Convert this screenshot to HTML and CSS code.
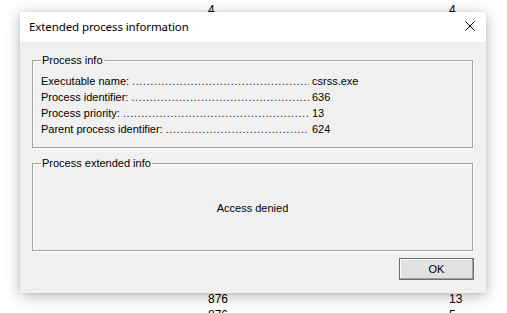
FILE: index.html
```html
<!DOCTYPE html>
<html>
<head>
<meta charset="utf-8">
<link rel="stylesheet" href="styles.css">
</head>
<body>
<div class="bg">
  <div class="bg-row top"><span class="c1">4</span><span class="c2">4</span></div>
  <div class="bg-spacer"></div>
  <div class="bg-row"><span class="c1">876</span><span class="c2">13</span></div>
  <div class="bg-row"><span class="c1">876</span><span class="c2">5</span></div>
</div>

<div class="window">
  <div class="titlebar">
    <span class="title">Extended process information</span>
    <svg class="close" width="10" height="10" viewBox="0 0 10 10"><path d="M0.5 0.5 L9.5 9.5 M9.5 0.5 L0.5 9.5" stroke="#000" stroke-width="1" fill="none"/></svg>
  </div>
  <div class="body">
    <fieldset class="group info">
      <legend>Process info</legend>
      <div class="row"><span class="lbl"><span class="name">Executable name:</span><span class="dots">..................................................</span></span><span class="val">csrss.exe</span></div>
      <div class="row"><span class="lbl"><span class="name">Process identifier:</span><span class="dots">.................................................</span></span><span class="val">636</span></div>
      <div class="row"><span class="lbl"><span class="name">Process priority:</span><span class="dots">...................................................</span></span><span class="val">13</span></div>
      <div class="row"><span class="lbl"><span class="name">Parent process identifier:</span><span class="dots">........................................</span></span><span class="val">624</span></div>
    </fieldset>
    <fieldset class="group ext">
      <legend>Process extended info</legend>
      <div class="denied">Access denied</div>
    </fieldset>
    <div class="buttons"><button class="ok">OK</button></div>
  </div>
</div>
</body>
</html>
```
FILE: styles.css
```css
html, body {
  margin: 0;
  padding: 0;
  background: #fff;
  width: 507px;
  height: 313px;
  overflow: hidden;
  font-family: "Liberation Sans", Arial, sans-serif;
  font-size: 11px;
  color: #000;
}

.bg {
  display: flex;
  flex-direction: column;
  padding-top: 2px;
}
.bg-row {
  display: flex;
  height: 16px;
  line-height: 16px;
  font-size: 12px;
}
.bg-row .c1 { margin-left: 208px; width: 241px; }
.bg-spacer { height: 273px; }

.window {
  position: absolute;
  left: 20px;
  top: 12px;
  width: 466px;
  height: 281px;
  background: #f0f0f0;
  box-shadow: 0 3px 14px rgba(0,0,0,0.28), 0 0 4px rgba(0,0,0,0.08);
  display: flex;
  flex-direction: column;
}

.titlebar {
  height: 30px;
  background: #fff;
  display: flex;
  align-items: center;
  justify-content: space-between;
  padding: 0 11px 0 9px;
}
.title {
  font-family: "Noto Sans", "Open Sans", sans-serif;
  font-size: 11.5px;
  letter-spacing: -0.1px;
  color: #000;
  margin-top: -1px;
}
.close { margin-top: -2px; }

.body {
  display: flex;
  flex-direction: column;
  padding: 12px 13px 0 12px;
}

.group {
  margin: 0;
  border: 1px solid #a0a0a0;
  box-shadow: inset 1px 1px 0 #fff, 1px 1px 0 #fff;
  padding: 0 8px;
  height: 94px;
  box-sizing: border-box;
}
.group legend {
  padding: 0 1px;
  line-height: 13px;
  font-size: 11px;
}

.info { padding-top: 6px; }

.row {
  display: flex;
  height: 16px;
  line-height: 16px;
}
.lbl {
  display: flex;
  width: 268px;
  overflow: hidden;
  white-space: nowrap;
}
.name { flex: none; margin-right: 3px; }
.dots {
  flex: 1;
  overflow: hidden;
  letter-spacing: 0.6px;
  white-space: nowrap;
  color: #222;
}
.val { padding-left: 3px; }

.ext { margin-top: 9px; }
.denied {
  text-align: center;
  padding-top: 32px;
  line-height: 13px;
}

.buttons {
  display: flex;
  justify-content: flex-end;
  margin-top: 7px;
}
.ok {
  width: 75px;
  height: 22px;
  margin-right: -1px;
  background: #e1e1e1;
  border: 1px solid #6f6f6f;
  box-shadow: inset -1px -1px 0 #a0a0a0, inset 1px 1px 0 #fff;
  font-family: "Liberation Sans", Arial, sans-serif;
  font-size: 11px;
  color: #000;
  padding: 0;
}
```
